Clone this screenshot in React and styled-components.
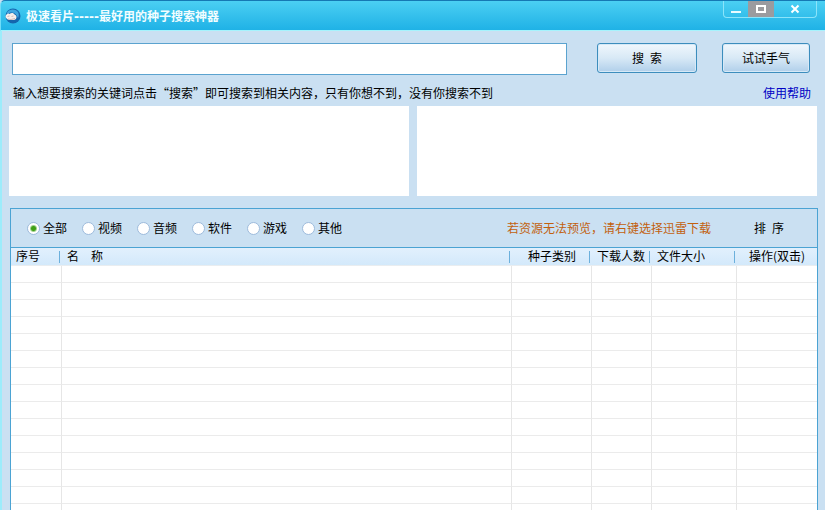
import React, { useState } from "react";
import styled, { createGlobalStyle } from "styled-components";

const GlobalStyle = createGlobalStyle`
	* {
		box-sizing: border-box;
	}

	body {
		margin: 0;
		overflow: hidden;
		background: #cae0f2;
	}

	body, button, input {
		font-family: "Noto Sans CJK SC", "Liberation Sans", sans-serif;
		font-size: 12px;
		line-height: 16px;
		color: #000;
	}
`;

const Window = styled.div`
	display: flex;
	flex-direction: column;
	height: 100vh;
	overflow: hidden;
`;

const TitleBar = styled.header`
	display: flex;
	align-items: flex-start;
	height: 31px;
	padding: 0 8px 0 4px;
	border-top: 1px solid #1579b4;
	border-left: 1px solid #6fdcf8;
	border-bottom: 1px solid #a5f3fd;
	border-top-left-radius: 5px;
	background: linear-gradient(#4bd0f3, #35c0ec 50%, #1fb2e6);
`;

const Logo = styled.svg`
	width: 16px;
	height: 16px;
	margin-top: 7px;
`;

const Title = styled.h1`
	flex: 1;
	margin: 8px 0 0 5px;
	font-family: "DejaVu Sans", "Noto Sans CJK SC", sans-serif;
	font-size: 12px;
	line-height: 16px;
	font-weight: 700;
	color: #f2fdff;
`;

const WindowButtons = styled.div`
	display: flex;
	height: 17px;
	border: 1px solid #8be4fa;
	border-top: none;
	border-radius: 0 0 4px 4px;
	overflow: hidden;
`;

const WindowButton = styled.button`
	display: flex;
	align-items: center;
	justify-content: center;
	width: ${(props) => props.$width};
	padding: 0;
	border: none;
	background: ${(props) => (props.$grey ? "#9b9b9f" : "transparent")};
`;

const Main = styled.main`
	display: flex;
	flex: 1;
	flex-direction: column;
	min-height: 0;
	padding: 12px 7px 0 7px;
	border-left: 2px solid #9cecfb;
	background: #cae0f2;
`;

const SearchRow = styled.form`
	display: flex;
	align-items: flex-start;
	padding: 0 8px 0 3px;
`;

const SearchInput = styled.input`
	flex: 1;
	min-width: 0;
	height: 32px;
	margin-right: 30px;
	padding: 0 6px;
	border: 1px solid #5ba3cf;
	background: #fff;
	outline: none;
`;

const Button = styled.button`
	width: ${(props) => props.$width};
	height: 30px;
	padding: 0;
	border: 1px solid #3c8dbd;
	border-radius: 3px;
	background: linear-gradient(#f0f7fd, #d8e9f6 50%, #b0cfea);
	box-shadow: inset 0 0 0 1px #d6e9f7;

	& + & {
		margin-left: 25px;
	}
`;

const HintRow = styled.div`
	display: flex;
	justify-content: space-between;
	height: 31px;
	padding: 10px 7px 0 4px;
`;

const Hint = styled.p`
	margin: 0;
`;

const HelpLink = styled.a`
	color: #0000c4;
	text-decoration: none;
`;

const Previews = styled.div`
	display: flex;
	gap: 8px;
	margin-right: 1px;
`;

const Preview = styled.section`
	flex: 1;
	height: 90px;
	background: #fff;
`;

const Results = styled.section`
	flex: 1;
	min-height: 0;
	margin: 12px 0 0 1px;
	border: 1px solid #4ba3d3;
	border-bottom: none;
	background: #fff;
	overflow: hidden;
`;

const Toolbar = styled.div`
	display: flex;
	align-items: center;
	height: 39px;
	padding: 0 33px 0 16px;
	border-bottom: 1px solid #4ba3d3;
	background: #cae0f2;
`;

const Filters = styled.div`
	display: flex;
	flex: 1;
	gap: 15px;
`;

const Filter = styled.label`
	display: flex;
	align-items: center;
	gap: 3px;
`;

const Radio = styled.input`
	appearance: none;
	width: 13px;
	height: 13px;
	margin: 0;
	border: 1px solid #9dbbdc;
	border-radius: 50%;
	background: #fff;

	&:checked {
		background: radial-gradient(circle, #3fa017 0 2px, #fff 4px);
	}
`;

const Notice = styled.span`
	margin-right: 43px;
	color: #c2600e;
`;

const SortButton = styled.button`
	padding: 0;
	border: none;
	background: none;
`;

const Table = styled.table`
	width: 100%;
	table-layout: fixed;
	border-collapse: separate;
	border-spacing: 0;
`;

const HeadCell = styled.th`
	width: ${(props) => props.$width};
	height: 18px;
	padding: 0 ${(props) => (props.$center ? "0" : "5px")} 2px;
	border-bottom: 1px solid #e9edf0;
	font-weight: 400;
	line-height: 15px;
	text-align: ${(props) => (props.$center ? "center" : "left")};
	white-space: nowrap;
	background: linear-gradient(#e2f0fd, #d3e9fb);

	&:not(:last-child) {
		background:
			linear-gradient(#6cb0dc, #6cb0dc) right 2px center / 1px 12px no-repeat,
			linear-gradient(#e2f0fd, #d3e9fb);
	}
`;

const Cell = styled.td`
	height: 17px;
	padding: 0;
	border-bottom: 1px solid #ebebeb;

	&:not(:last-child) {
		border-right: 1px solid #e6e6e6;
	}
`;

const filters = ["全部", "视频", "音频", "软件", "游戏", "其他"];

const columns = [
	{ name: "序号", width: "51px" },
	{ name: "名\u3000称", width: "auto" },
	{ name: "种子类别", width: "80px", center: true },
	{ name: "下载人数", width: "60px" },
	{ name: "文件大小", width: "85px" },
	{ name: "操作(双击)", width: "80px", center: true },
];

const emptyRows = Array.from({ length: 40 }, (_, i) => i);

const BirdLogo = () => (
	<Logo viewBox="0 0 16 16" aria-hidden="true">
		<circle cx="8" cy="8" r="7.500" fill="#1565ad" />
		<path d="M2 4.500C4 1 10 0 13 4c1 2 1 4 0 6-1-3-3-5.500-6-5.500-2 0-3.500.500-5 2z" fill="#3fa5e0" />
		<path d="M.5 8C1.500 6 3 5 4.500 6 6 4.500 8.500 4.500 9.500 6.500c2 .5 2.500 2.500 1.500 4.500-2 1.500-4 1-5.500 1C3 12 .5 10.500.5 8z" fill="#f6eeec" />
		<path d="M2.500 8.500l2-.5M6.500 8.500l2-.5M3 11l3 .5 4-1" stroke="#c3a9ab" strokeWidth=".8" fill="none" />
	</Logo>
);

const App = () => {
	const [keyword, setKeyword] = useState("");
	const [filter, setFilter] = useState("全部");

	return (
		<Window lang="zh-CN">
			<GlobalStyle />
			<TitleBar>
				<BirdLogo />
				<Title>极速看片-----最好用的种子搜索神器</Title>
				<WindowButtons>
					<WindowButton type="button" aria-label="最小化" $width="24px">
						<svg width="12" height="12">
							<path d="M1 9h10" stroke="#e9fbff" strokeWidth="2" />
						</svg>
					</WindowButton>
					<WindowButton type="button" aria-label="最大化" $width="26px" $grey>
						<svg width="12" height="12">
							<rect x="2" y="3" width="8" height="6" fill="none" stroke="#fff" strokeWidth="2" />
						</svg>
					</WindowButton>
					<WindowButton type="button" aria-label="关闭" $width="42px">
						<svg width="12" height="12">
							<path d="M2.500 2.500l7 7M9.500 2.500l-7 7" stroke="#fff" strokeWidth="2" />
						</svg>
					</WindowButton>
				</WindowButtons>
			</TitleBar>
			<Main>
				<SearchRow onSubmit={(e) => e.preventDefault()}>
					<SearchInput
						aria-label="搜索"
						value={keyword}
						onChange={(e) => setKeyword(e.target.value)}
					/>
					<Button type="submit" $width="100px">搜{"\u2002"}索</Button>
					<Button type="button" $width="88px">试试手气</Button>
				</SearchRow>
				<HintRow>
					<Hint>输入想要搜索的关键词点击“搜索”即可搜索到相关内容，只有你想不到，没有你搜索不到</Hint>
					<HelpLink href="#help">使用帮助</HelpLink>
				</HintRow>
				<Previews>
					<Preview />
					<Preview />
				</Previews>
				<Results>
					<Toolbar>
						<Filters>
							{filters.map((name) => (
								<Filter key={name}>
									<Radio
										type="radio"
										name="filter"
										checked={filter === name}
										onChange={() => setFilter(name)}
									/>
									{name}
								</Filter>
							))}
						</Filters>
						<Notice>若资源无法预览，请右键选择迅雷下载</Notice>
						<SortButton type="button">排{"\u2002"}序</SortButton>
					</Toolbar>
					<Table>
						<thead>
							<tr>
								{columns.map((column) => (
									<HeadCell key={column.name} $width={column.width} $center={column.center}>
										{column.name}
									</HeadCell>
								))}
							</tr>
						</thead>
						<tbody>
							{emptyRows.map((row) => (
								<tr key={row}>
									{columns.map((column) => (
										<Cell key={column.name} />
									))}
								</tr>
							))}
						</tbody>
					</Table>
				</Results>
			</Main>
		</Window>
	);
};

export default App;
